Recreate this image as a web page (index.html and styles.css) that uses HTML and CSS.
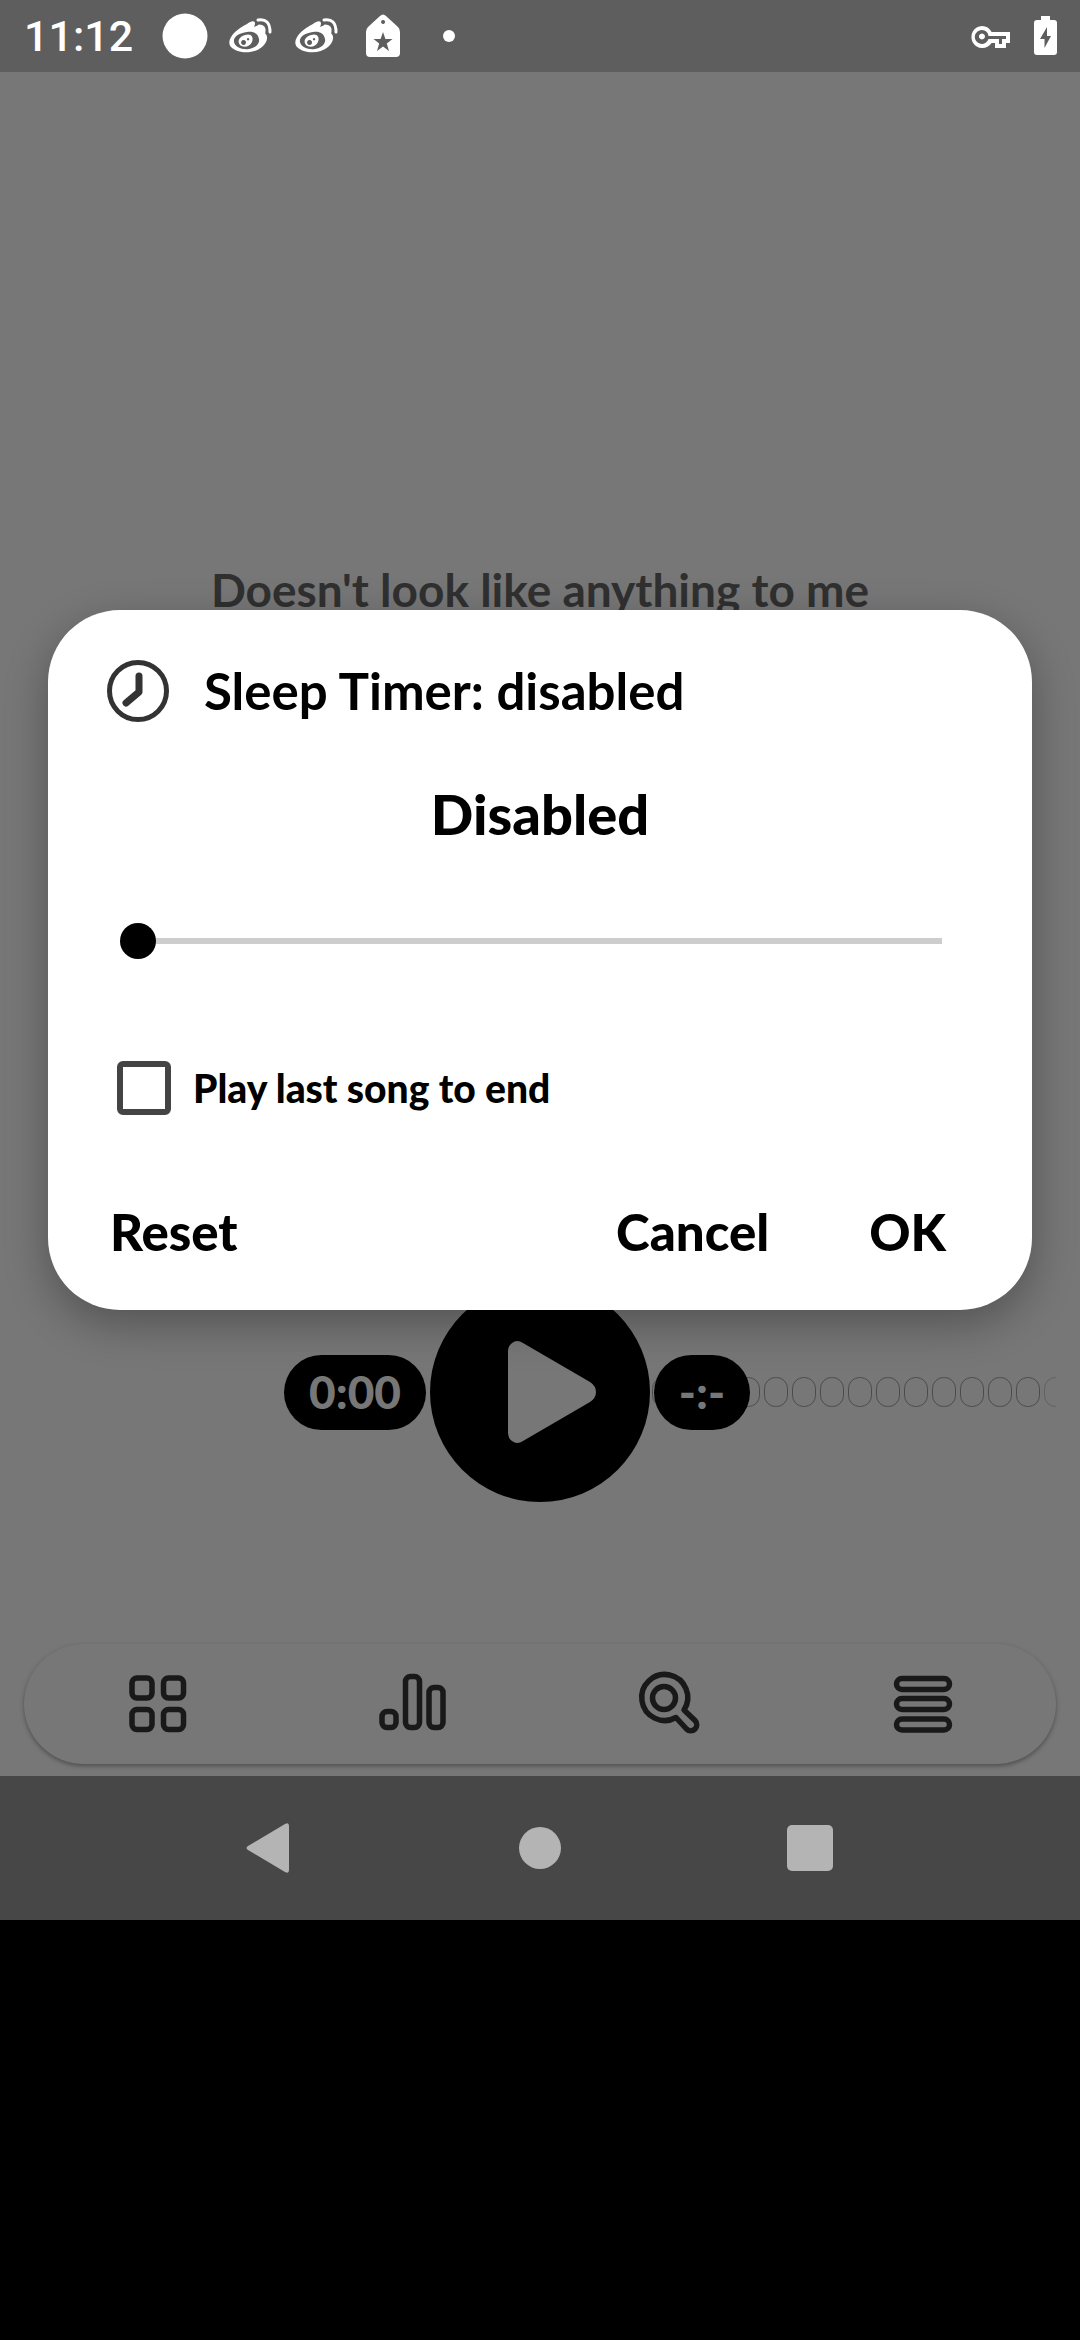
FILE: index.html
```html
<!DOCTYPE html>
<html lang="en">
<head>
<meta charset="utf-8">
<meta name="viewport" content="width=device-width, initial-scale=1">
<title>Sleep Timer</title>
<link rel="stylesheet" href="styles.css">
</head>
<body>
<div class="device">
  <header class="status">
    <span class="clock">11:12</span>
    <svg class="status-icon" viewBox="0 0 48 48"><circle cx="24" cy="24" r="22.500"/></svg>
    <svg class="status-icon" viewBox="0 0 48 48"><use href="#weibo"/></svg>
    <svg class="status-icon" viewBox="0 0 48 48"><use href="#weibo"/></svg>
    <svg class="status-icon" viewBox="0 0 48 48"><path fill-rule="evenodd" d="M21 4Q24 1 27 4L39 15Q41 17 41 20V41Q41 45 37 45H11Q7 45 7 41V20Q7 17 9 15ZM24 8a2 2 0 1 0 .1 0ZM24 20l-2.400 7H14.500l5.700 4.400L18 39l6-4.500L30 39l-2.200-7.600L33.500 27h-7.100Z"/></svg>
    <svg class="status-icon status-more" viewBox="0 0 48 48"><circle cx="24" cy="24" r="6"/></svg>
    <svg class="status-icon" viewBox="0 0 48 48"><path fill-rule="evenodd" d="M15 14a11 11 0 0 1 9.600 6H43V31H39V36H28V31H24.600A11 11 0 1 1 15 14ZM15 18a7 7 0 1 0 6.500 9H32V32H35V27H39V24H21.500A7 7 0 0 0 15 18ZM15 21.500a3 3 0 1 1-.1 0Z"/></svg>
    <svg class="status-icon status-battery" viewBox="0 0 24 48"><path fill-rule="evenodd" d="M8 4H17V8H21Q24 8 24 11V40Q24 43 21 43H4Q1 43 1 40V11Q1 8 4 8H8ZM14 15L7 27h4.500v9L18 24H14Z"/></svg>
  </header>

  <main class="app">
    <h1 class="song">Doesn't look like anything to me</h1>
    <div class="player">
      <svg class="wave" viewBox="0 0 404 32"><g fill="none" stroke="#4c4c4c"><use href="#b" x="0"/><use href="#b" x="84"/><use href="#b" x="112"/><use href="#b" x="140"/><use href="#b" x="168"/><use href="#b" x="196"/><use href="#b" x="224"/><use href="#b" x="252"/><use href="#b" x="280"/><use href="#b" x="308"/><use href="#b" x="336"/><use href="#b" x="364"/><use href="#b" x="392" opacity=".5"/></g></svg>
      <span class="pill elapsed">0:00</span>
      <button class="play" type="button" aria-label="Play"><svg viewBox="0 0 88 102"><path d="M0 10Q0 5 4 2Q9-2 15 2L82 41Q88 45 88 51Q88 57 82 61L15 100Q9 104 4 100Q0 97 0 92Z"/></svg></button>
      <span class="pill remaining">-:-</span>
    </div>
    <nav class="tabs">
      <button type="button" aria-label="Library"><svg viewBox="0 0 72 72"><g class="line"><rect x="10" y="10" width="20" height="20" rx="5"/><rect x="41.500" y="10" width="20" height="20" rx="5"/><rect x="10" y="41.500" width="20" height="20" rx="5"/><rect x="41.500" y="41.500" width="20" height="20" rx="5"/></g></svg></button>
      <button type="button" aria-label="Equalizer"><svg viewBox="0 0 72 72"><g class="line"><rect x="5" y="43.500" width="14" height="16" rx="5"/><rect x="28.500" y="8.500" width="14" height="51" rx="5"/><rect x="52" y="19.500" width="14" height="40" rx="5"/></g></svg></button>
      <button type="button" aria-label="Search"><svg viewBox="0 0 72 72"><g class="line"><circle cx="32" cy="30" r="11.500"/><path d="M44 49.500A23 23 0 1 1 52 42L63 52.500A6 6 0 0 1 54.500 61Z"/></g></svg></button>
      <button type="button" aria-label="Menu"><svg viewBox="0 0 72 72"><g class="line"><rect x="9.500" y="10.500" width="53" height="11" rx="5.500"/><rect x="9.500" y="30.500" width="53" height="11" rx="5.500"/><rect x="9.500" y="51" width="53" height="11" rx="5.500"/></g></svg></button>
    </nav>
  </main>

  <nav class="system">
    <button type="button" aria-label="Back"><svg viewBox="0 0 48 54"><path d="M2 25L39 3Q43 1 43 5V49Q43 53 39 51L2 29Q-1 27 2 25Z"/></svg></button>
    <button type="button" aria-label="Home"><svg viewBox="0 0 48 54"><circle cx="24" cy="27" r="21"/></svg></button>
    <button type="button" aria-label="Recents"><svg viewBox="0 0 48 54"><rect x="1" y="4" width="46" height="46" rx="5"/></svg></button>
  </nav>

  <div class="overlay">
    <form class="dialog" role="dialog" aria-labelledby="dialog-title">
      <div class="dialog-head">
        <svg class="clock-icon" viewBox="0 0 64 64"><circle cx="32" cy="32" r="28.500"/><path d="M33 17V33L20 44"/></svg>
        <h2 id="dialog-title">Sleep Timer: disabled</h2>
      </div>
      <label class="value" for="minutes">Disabled</label>
      <input class="slider" id="minutes" type="range" min="0" max="120" value="0">
      <div class="option">
        <input class="check" id="last-song" type="checkbox">
        <label for="last-song">Play last song to end</label>
      </div>
      <div class="actions">
        <button class="reset" type="reset">Reset</button>
        <button type="button">Cancel</button>
        <button type="submit">OK</button>
      </div>
    </form>
  </div>
</div>

<svg class="defs" aria-hidden="true">
  <defs>
    <rect id="b" x=".5" y="1.500" width="23" height="29" rx="11"/>
    <g id="weibo">
      <path fill-rule="evenodd" d="M20 12C26 7 30 9 27 15C34 11 39 14 36 20C43 23 40 31 35 35C27 42 11 42 4 35C-2 28 9 17 20 12ZM20 20C12 21 6 25 7 30C8 35 15 38 22 37C29 36 33 31 32 27C31 21 26 19 20 20Z"/>
      <path fill-rule="evenodd" d="M18 23C24 21 27 25 25 30C23 35 16 36 13 33C10 29 12 25 18 23ZM16.500 28a2.500 2.500 0 1 0 .1 0ZM21 26a1.200 1.200 0 1 0 .1 0Z"/>
      <path class="signal" d="M31 8Q43 6 43 20M32 14Q38 14 37 20"/>
    </g>
  </defs>
</svg>
</body>
</html>
```
FILE: styles.css
```css
* { box-sizing: border-box; }

body {
  margin: 0;
  background: #000;
  font-family: Lato, "Liberation Sans", sans-serif;
  font-weight: 900;
}

button {
  padding: 0;
  border: 0;
  background: none;
  color: inherit;
  font: inherit;
}

svg { display: block; }
.defs { width: 0; height: 0; position: absolute; }

.device {
  position: relative;
  display: flex;
  flex-direction: column;
  min-height: calc(100vh - 420px);
}

/* Status bar */
.status {
  display: flex;
  align-items: center;
  height: 72px;
  padding: 0 23px 0 24px;
  gap: 18px;
  background: #5e5e5e;
  color: #fff;
  fill: #fff;
}
.clock {
  width: 119px;
  font: 500 43px/72px Roboto, sans-serif;
}
.status-icon { width: 48px; height: 48px; }
.status-battery { width: 24px; }
.status-more { margin-right: auto; }
.signal { fill: none; stroke: #fff; stroke-width: 3; stroke-linecap: round; }

/* Player screen */
.app {
  flex: 1;
  display: flex;
  flex-direction: column;
  padding: 488px 24px 12px;
  background: #777;
}
.song {
  margin: 0 0 auto;
  color: #303030;
  font-size: 46px;
  line-height: 60px;
  text-align: center;
}
.player {
  position: relative;
  display: grid;
  grid-template-columns: 1fr auto 1fr;
  align-items: center;
  gap: 4px;
  margin-bottom: 142px;
}
.wave {
  position: absolute;
  left: calc(50% + 112px);
  width: 404px;
  height: 32px;
}
.pill {
  position: relative;
  height: 75px;
  border-radius: 38px;
  background: #000;
  color: #777;
  font-size: 46px;
  line-height: 74px;
  text-align: center;
}
.elapsed { justify-self: end; width: 142px; }
.remaining { justify-self: start; width: 96px; }
.play {
  display: grid;
  place-items: center;
  width: 220px;
  height: 220px;
  padding-left: 23px;
  border-radius: 50%;
  background: #000;
  fill: #777;
}
.play svg { width: 88px; height: 102px; }

.tabs {
  display: grid;
  grid-template-columns: repeat(4, 1fr);
  height: 120px;
  padding: 0 6px;
  border-radius: 60px;
  background: #777;
  box-shadow: 0 2px 4px #4f4f4f;
}
.tabs button { display: grid; place-items: center; }
.tabs svg { width: 72px; height: 72px; }
.line { fill: none; stroke: #191919; stroke-width: 5.500; stroke-linejoin: round; }

/* System navigation */
.system {
  display: flex;
  justify-content: center;
  align-items: center;
  gap: 222px;
  height: 144px;
  background: #474747;
  fill: #b4b4b4;
}
.system svg { width: 48px; height: 54px; }

/* Sleep timer dialog */
.overlay {
  position: absolute;
  inset: 0;
  display: grid;
  align-items: center;
  padding: 0 48px;
}
.dialog {
  padding: 48px 58px 42px;
  border-radius: 72px;
  background: #fff;
  box-shadow: 0 14px 44px rgba(0, 0, 0, .3);
  color: #000;
}
.dialog-head {
  display: flex;
  align-items: center;
  gap: 34px;
  height: 66px;
}
.dialog-head h2 { margin: 0; font-size: 51px; line-height: 66px; }
.clock-icon {
  width: 64px;
  height: 64px;
  fill: none;
  stroke: #333;
  stroke-width: 5;
}
.clock-icon path { stroke-width: 7; stroke-linecap: round; stroke-linejoin: round; }
.value {
  display: block;
  margin-top: 54px;
  font-size: 56px;
  line-height: 72px;
  text-align: center;
}
.slider {
  appearance: none;
  display: block;
  width: calc(100% - 46px);
  height: 36px;
  margin: 73px 32px 0 14px;
  background: linear-gradient(#cdcdcd, #cdcdcd) 18px center / calc(100% - 18px) 6px no-repeat;
}
.slider::-webkit-slider-thumb {
  appearance: none;
  width: 36px;
  height: 36px;
  border-radius: 50%;
  background: #000;
}
.option {
  display: flex;
  align-items: center;
  gap: 22px;
  margin: 102px 0 0 11px;
  font-size: 39px;
  line-height: 54px;
}
.check {
  appearance: none;
  width: 54px;
  height: 54px;
  margin: 0;
  border: 6px solid #444;
  border-radius: 6px;
}
.actions {
  display: flex;
  gap: 100px;
  margin-top: 81px;
  padding: 0 28px 0 4px;
  font-size: 51px;
  line-height: 72px;
}
.reset { margin-right: auto; }
```
